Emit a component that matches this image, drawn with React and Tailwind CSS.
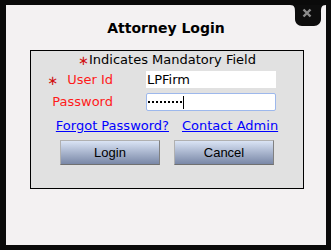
import React from 'react';

const verdana = { fontFamily: '"DejaVu Sans", Verdana, sans-serif' };

const CloseTab = () => (
  <div className="absolute top-0 right-0 w-[36px] h-[21px]">
    <svg width="36" height="21" viewBox="0 0 36 21" className="block">
      <path d="M0 0 H36 C31 0 31 3 31 8 V14 C31 18 28 21 24 21 H12 C8 21 5 18 5 14 V8 C5 3 5 0 0 0 Z" fill="#0d0d0d" />
      <path d="M13.5 4.5 L20.5 11.5 M20.5 4.5 L13.5 11.5" stroke="#8c8c8c" strokeWidth="2.4" strokeLinecap="butt" />
    </svg>
  </div>
);

const Button = ({ children }) => (
  <button
    className="w-[100px] h-[25px] bg-gradient-to-b from-[#dae4f5] to-[#7a88a7] border border-[#b0b0b0] border-b-[#707070] border-r-[#808080] text-[13px] text-black"
    style={{ fontFamily: '"Liberation Sans", Arial, sans-serif' }}
  >
    {children}
  </button>
);

const App = () => {
  return (
    <div className="w-[331px] h-[250px] bg-[#0a0a0a] pt-[5px] pl-[6px] pr-[5px] pb-[5px]">
      <div className="relative h-full bg-[#f3f1f2]" style={verdana}>
        <CloseTab />
        <h1 className="pt-[13px] text-center text-[14px] font-bold leading-[20px] text-black">
          Attorney Login
        </h1>
        <div className="mt-[12px] ml-[24px] w-[274px] h-[139px] border border-black bg-[#e1e1e1]">
          <p className="pt-[1px] text-center text-[13px] leading-[16px] text-black">
            <span className="text-[#d01010] relative top-[1px]">∗</span>Indicates Mandatory Field
          </p>
          <div className="mt-[3px] flex items-center h-[17px]">
            <div className="w-[82px] flex justify-end text-[13px] text-[#ff1a1a]">
              <span className="text-[#d01010] relative top-[1px] mr-[9px]">∗</span>
              <span>User Id</span>
            </div>
            <input
              readOnly
              value="LPFirm"
              className="ml-[33px] w-[130px] h-[17px] bg-white px-[1px] text-[13px] text-black outline-none"
              style={verdana}
            />
          </div>
          <div className="mt-[5px] flex items-center h-[18px]">
            <div className="w-[82px] text-right text-[13px] text-[#ff1a1a]">Password</div>
            <div className="ml-[33px] w-[130px] h-[18px] bg-white border border-[#9db8ec] rounded-[2px] flex items-center pl-[1px]">
              <div className="flex gap-[2px]">
                {Array.from({ length: 9 }).map((_, i) => (
                  <span key={i} className="w-[2px] h-[2px] bg-black"></span>
                ))}
              </div>
              <span className="ml-[1px] w-px h-[13px] bg-black"></span>
            </div>
          </div>
          <div className="mt-[7px] flex justify-center gap-[13px] text-[13px] leading-[16px]">
            <a href="#" className="text-[#0000ff] underline">Forgot Password?</a>
            <a href="#" className="text-[#0000ff] underline">Contact Admin</a>
          </div>
          <div className="mt-[6px] flex justify-center gap-[14px]">
            <Button>Login</Button>
            <Button>Cancel</Button>
          </div>
        </div>
      </div>
    </div>
  );
};

export default App;
